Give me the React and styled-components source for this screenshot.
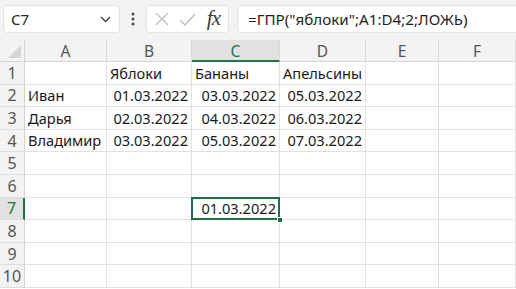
import styled, { createGlobalStyle, css } from "styled-components";

const GlobalStyle = createGlobalStyle`
  html, body {
    margin: 0;
    padding: 0;
    background: #ffffff;
    overflow: hidden;
  }
  * { box-sizing: border-box; }
`;

const Page = styled.div`
  width: 516px;
  height: 289px;
  overflow: hidden;
  font-family: "Noto Sans", "Open Sans", sans-serif;
  background: #ffffff;
`;

const Toolbar = styled.div`
  height: 40px;
  background: #f3f3f3;
  display: flex;
  align-items: flex-start;
  padding: 5px 0 0 3px;
`;

const Box = styled.div`
  height: 28px;
  background: #ffffff;
  border: 1px solid #e3e3e3;
  border-radius: 4px;
  display: flex;
  align-items: center;
`;

const NameBox = styled(Box)`
  width: 117px;
  padding: 0 8px 0 7px;
  justify-content: space-between;
  font-size: 15px;
  color: #262626;
`;

const Grip = styled.div`
  width: 26px;
  height: 28px;
  display: flex;
  align-items: center;
  justify-content: center;
`;

const IconBox = styled(Box)`
  width: 83px;
  padding: 0 6px 0 8px;
  justify-content: space-between;
`;

const Fx = styled.span`
  font-family: "Liberation Serif", "DejaVu Serif", serif;
  font-style: italic;
  font-size: 21px;
  color: #3a3a3a;
  letter-spacing: -1px;
  padding-right: 2px;
  margin-top: -2px;
`;

const FormulaBox = styled(Box)`
  flex: 1;
  margin-left: 8px;
  margin-right: -6px;
  padding-left: 10px;
  font-size: 15.2px;
  color: #1f1f1f;
`;

const Sheet = styled.div`
  display: grid;
  grid-template-columns: 25px 82px 85px 88px 86px 73px 1fr;
  grid-template-rows: 22px repeat(10, 22.6px);
`;

const Corner = styled.div`
  background: #f3f3f3;
  border-right: 1px solid #d4d4d4;
  border-bottom: 1px solid #d4d4d4;
  display: flex;
  align-items: flex-end;
  justify-content: flex-end;
  padding: 0 3px 3px 0;
`;

const ColHead = styled.div`
  background: ${(p) => (p.$active ? "#e1e1e1" : "#f3f3f3")};
  border-right: 1px solid #d9d9d9;
  border-bottom: ${(p) => (p.$active ? "2px solid #217346" : "1px solid #d4d4d4")};
  color: ${(p) => (p.$active ? "#217346" : "#555555")};
  font-size: 15.5px;
  display: flex;
  align-items: center;
  justify-content: center;
  padding-top: 1px;
`;

const RowHead = styled.div`
  background: ${(p) => (p.$active ? "#e1e1e1" : "#f3f3f3")};
  border-right: ${(p) => (p.$active ? "2px solid #217346" : "1px solid #d4d4d4")};
  border-bottom: 1px solid #dedede;
  color: ${(p) => (p.$active ? "#217346" : "#555555")};
  font-size: 16px;
  display: flex;
  align-items: center;
  justify-content: center;
`;

const Cell = styled.div`
  position: relative;
  border-right: 1px solid #e1e1e1;
  border-bottom: 1px solid #e1e1e1;
  font-size: 14.6px;
  color: #1a1a1a;
  white-space: nowrap;
  display: flex;
  align-items: flex-end;
  padding: 0 3px 1px;
  justify-content: ${(p) => (p.$num ? "flex-end" : "flex-start")};
  ${(p) =>
    p.$selected &&
    css`
      &::after {
        content: "";
        position: absolute;
        inset: -1px -1px -1px -1px;
        border: 2px solid #1e6f43;
        pointer-events: none;
      }
    `}
`;

const Handle = styled.span`
  position: absolute;
  right: -4px;
  bottom: -4px;
  width: 6px;
  height: 6px;
  background: #1e6f43;
  border: 1px solid #ffffff;
  z-index: 1;
`;

const cols = ["A", "B", "C", "D", "E", "F"];

const data = {
  1: ["", "Яблоки", "Бананы", "Апельсины"],
  2: ["Иван", "01.03.2022", "03.03.2022", "05.03.2022"],
  3: ["Дарья", "02.03.2022", "04.03.2022", "06.03.2022"],
  4: ["Владимир", "03.03.2022", "05.03.2022", "07.03.2022"],
  7: ["", "", "01.03.2022"],
};

const isNum = (v) => /^\d/.test(v);

export default function App() {
  return (
    <Page>
      <GlobalStyle />
      <Toolbar>
        <NameBox>
          <span>C7</span>
          <svg width="11" height="7" viewBox="0 0 11 7">
            <path d="M1 1l4.5 4.5L10 1" fill="none" stroke="#404040" strokeWidth="1.3" />
          </svg>
        </NameBox>
        <Grip>
          <svg width="4" height="14" viewBox="0 0 4 14">
            <circle cx="2" cy="2" r="1.5" fill="#4a4a4a" />
            <circle cx="2" cy="7" r="1.5" fill="#4a4a4a" />
            <circle cx="2" cy="12" r="1.5" fill="#4a4a4a" />
          </svg>
        </Grip>
        <IconBox>
          <svg width="14" height="14" viewBox="0 0 14 14">
            <path d="M1 1l12 12M13 1L1 13" stroke="#bdbdbd" strokeWidth="1.3" />
          </svg>
          <svg width="17" height="13" viewBox="0 0 17 13">
            <path d="M1 7l5 5L16 1" fill="none" stroke="#bdbdbd" strokeWidth="1.3" />
          </svg>
          <Fx>fx</Fx>
        </IconBox>
        <FormulaBox>=ГПР("яблоки";A1:D4;2;ЛОЖЬ)</FormulaBox>
      </Toolbar>
      <Sheet>
        <Corner>
          <svg width="13" height="13" viewBox="0 0 13 13">
            <path d="M13 0V13H0Z" fill="#d6d6d6" />
          </svg>
        </Corner>
        {cols.map((c) => (
          <ColHead key={c} $active={c === "C"}>
            {c}
          </ColHead>
        ))}
        {Array.from({ length: 10 }, (_, i) => i + 1).map((r) => (
          <Row key={r} r={r} />
        ))}
      </Sheet>
    </Page>
  );
}

function Row({ r }) {
  const values = data[r] || [];
  return (
    <>
      <RowHead $active={r === 7}>{r}</RowHead>
      {cols.map((c, i) => {
        const v = values[i] || "";
        const selected = r === 7 && c === "C";
        return (
          <Cell key={c} $num={isNum(v)} $selected={selected}>
            {v}
            {selected && <Handle />}
          </Cell>
        );
      })}
    </>
  );
}
